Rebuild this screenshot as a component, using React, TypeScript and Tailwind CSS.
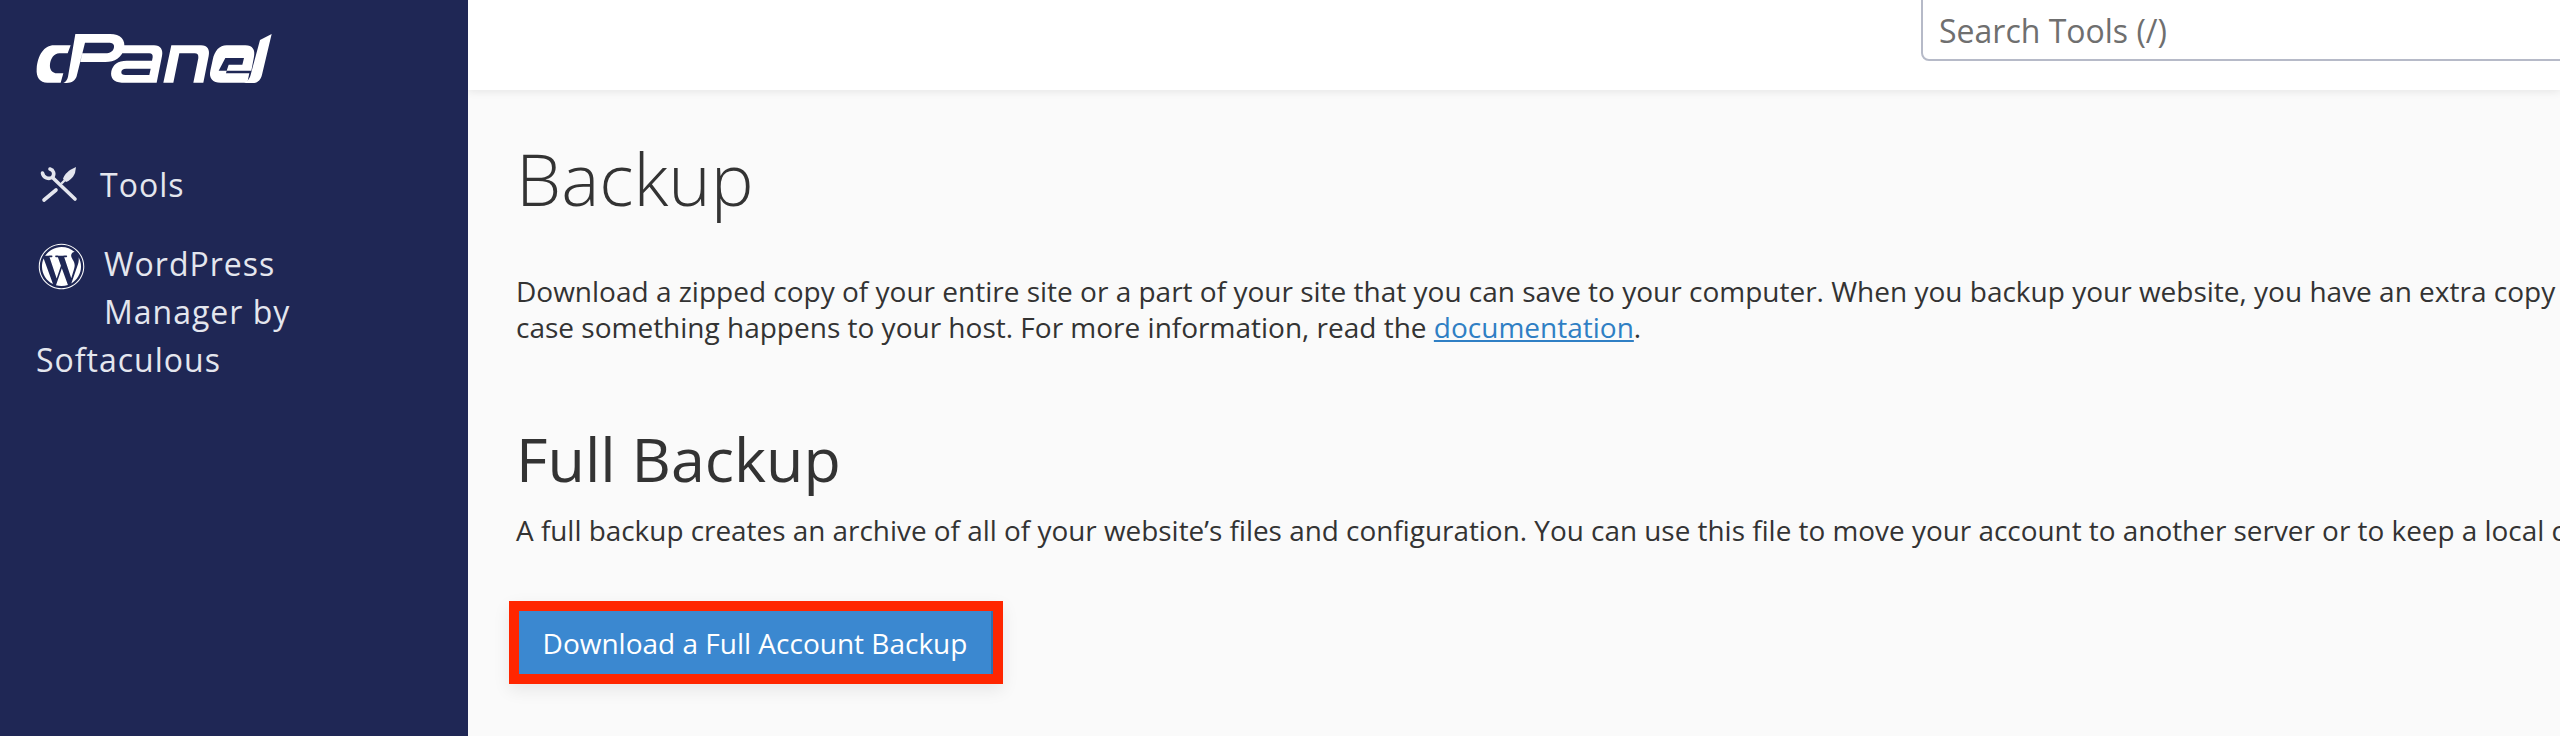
import { FaWordpress } from "react-icons/fa";

function Logo() {
  return (
    <svg width="250" height="62" viewBox="0 0 750 186" className="block" aria-label="cPanel" fill="#ffffff" fillRule="evenodd">
      <path d="M72 52H122L113 76H88C72 76 62 92 60 108C58 124 66 136 82 136H100L92 164H52C30 164 18 148 20 122C23 82 42 52 72 52Z" />
      <path d="M136 18H240C272 18 288 36 282 62C276 88 254 102 226 102H150L157 76H226C240 76 250 70 252 58C254 48 246 44 236 44H165L140 145C136 158 125 165 110 165H100C108 162 112 154 114 146Z" />
      <path d="M262 52H372C392 52 400 66 396 84L380 164H275C252 164 240 150 244 130C248 110 264 98 290 98H366L368 88C369 80 365 76 358 76H255ZM288 122C279 122 274 126 274 132C273 138 278 141 286 141H358L362 122Z" />
      <path d="M424 52H513C533 52 540 66 536 84L520 164H490L505 90C506 80 502 76 494 76H448L430 164H400Z" />
      <path d="M590 52H646C668 52 676 66 672 86L664 128H590L588 136H658L652 164H572C548 164 536 150 541 128L548 96C554 68 568 52 590 52ZM586 90H642L637 110H596L590 128H566Z" />
      <path d="M725 18L690 36L662 140C658 154 652 160 642 165H668C684 165 692 155 696 140Z" />
    </svg>
  );
}

function ToolsIcon() {
  return (
    <svg width="38" height="38" viewBox="0 0 38 38" fill="none" stroke="#e4e6ee" strokeLinecap="round" className="shrink-0">
      <path d="M35 33L13 12" strokeWidth="3.6" />
      <path d="M2.5 7C3 11.5 9 14 12.5 11C15 8 13.5 4 10 3" strokeWidth="3.6" />
      <path d="M16 24L4 34" strokeWidth="3.6" />
      <path d="M24 15L22 17" strokeWidth="2.4" />
      <path d="M36 1L35 7C33 12 29 15 26 16L23 13C24 9 28 5 32 3Z" fill="#e4e6ee" stroke="none" />
    </svg>
  );
}

export default function App() {
  return (
    <div className="flex h-[736px] w-full overflow-hidden bg-[#fafafa] font-['Open_Sans',sans-serif] text-[#333333]">
      <aside className="w-[468px] shrink-0 bg-[#1f2755] pl-[36px] text-[32px] leading-[48px] tracking-[1px] text-[#e4e6ee]">
        <div className="-ml-[6px] mt-[28px]">
          <Logo />
        </div>
        <div className="mt-[71px] flex h-[48px] items-center gap-[22px] pl-[4px]">
          <ToolsIcon />
          <span>Tools</span>
        </div>
        <div className="mt-[31px] w-[300px]">
          <div className="flex h-[48px] items-start">
            <FaWordpress className="ml-[2px] mr-[19px] mt-[3px] h-[47px] w-[47px] shrink-0" color="#ffffff" />
            <span>WordPress</span>
          </div>
          <span className="ml-[68px] block">Manager by</span>
          <span className="block">Softaculous</span>
        </div>
      </aside>
      <main className="min-w-0 flex-1 overflow-hidden">
        <header className="flex h-[90px] items-end bg-white pb-[29px] pl-[1453px] shadow-[0_2px_8px_rgba(0,0,0,0.08)]">
          <input
            readOnly
            placeholder="Search Tools (/)"
            className="h-[80px] w-[800px] shrink-0 rounded-[8px] border-2 border-[#b6bac8] bg-white pl-[16px] pt-[18px] text-[32px] text-[#333333] placeholder:text-[#6f6f6f]"
          />
        </header>
        <div className="pl-[48px] whitespace-nowrap">
          <h1 className="mt-[38px] text-[72px] font-light leading-[100px]">Backup</h1>
          <p className="mt-[45px] text-[28px] leading-[36px]">
            Download a zipped copy of your entire site or a part of your site that you can save to your computer. When you backup your website, you have an extra copy
            <br />
            case something happens to your host. For more information, read the{" "}
            <a className="text-[#2f7fc4] underline" href="#">documentation</a>.
          </p>
          <h2 className="mt-[76px] text-[61px] font-medium leading-[76px]">Full Backup</h2>
          <p className="mt-[15px] text-[27.9px] leading-[36px]">
            A full backup creates an archive of all of your website’s files and configuration. You can use this file to move your account to another server or to keep a local copy
          </p>
          <button className="mt-[53px] -ml-[7px] block h-[83px] w-[494px] border-[10px] border-[#ff2600] bg-[#3b88d0] pr-[2px] text-center text-[28px] leading-[36px] text-white shadow-[inset_-2px_0_0_#2f6fb0,0_6px_16px_rgba(0,0,0,0.08)]">
            Download a Full Account Backup
          </button>
        </div>
      </main>
    </div>
  );
}
